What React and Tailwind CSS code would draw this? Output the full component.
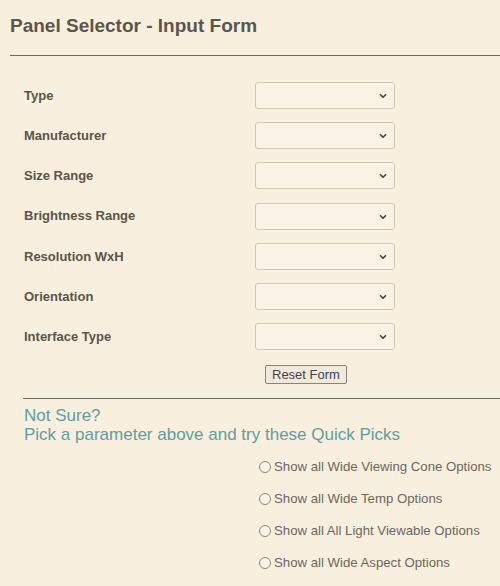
import { ChevronDown } from 'lucide-react';

const campos = [
  'Type',
  'Manufacturer',
  'Size Range',
  'Brightness Range',
  'Resolution WxH',
  'Orientation',
  'Interface Type',
];

const picks = [
  'Show all Wide Viewing Cone Options',
  'Show all Wide Temp Options',
  'Show all All Light Viewable Options',
  'Show all Wide Aspect Options',
];

function Selector() {
  return (
    <div className="relative w-[140px] h-[27px] rounded-[3px] border border-[#cfc6b4] bg-[#faf2e4]">
      <ChevronDown className="absolute right-[6px] top-[8px] w-[10px] h-[10px] text-[#4a4438]" strokeWidth={4} />
    </div>
  );
}

export default function App() {
  return (
    <div className="w-full min-h-[586px] bg-[#f9efdf] font-['Liberation_Sans',Arial,sans-serif] overflow-hidden">
      <h1 className="pt-[14px] pl-[10px] text-[19px] leading-[23px] font-bold text-[#5b564a]">
        Panel Selector - Input Form
      </h1>
      <div className="mt-[18px] ml-[10px] border-t border-[#6f6a5f]" />

      <div className="mt-[26px] flex flex-col gap-[13.2px]">
        {campos.map((label) => (
          <div key={label} className="flex items-center h-[27px]">
            <div className="w-[255px] pl-[24px] text-[13px] font-bold text-[#5a5548]">{label}</div>
            <Selector />
          </div>
        ))}
      </div>

      <div className="mt-[12px] pl-[265px]">
        <button className="h-[19px] px-[6px] text-[13px] leading-[17px] text-[#444] bg-[#f1e9dc] border border-[#8a8478] rounded-[2px]">
          Reset Form
        </button>
      </div>

      <div className="mt-[12px] ml-[23px] border-t border-[#6f6a5f]" />

      <div className="pl-[24px] pt-[7px] text-[17px] leading-[19px] text-[#5f9ea0]">
        <div>Not Sure?</div>
        <div>Pick a parameter above and try these Quick Picks</div>
      </div>

      <div className="mt-[14px] pl-[259px] flex flex-col gap-[14px]">
        {picks.map((p) => (
          <label key={p} className="flex items-center h-[18px] text-[13.2px] text-[#6b675e]">
            <span className="w-[12px] h-[12px] rounded-full border border-[#8c877d] mr-[3px] bg-[#faf3e6]" />
            {p}
          </label>
        ))}
      </div>
    </div>
  );
}
